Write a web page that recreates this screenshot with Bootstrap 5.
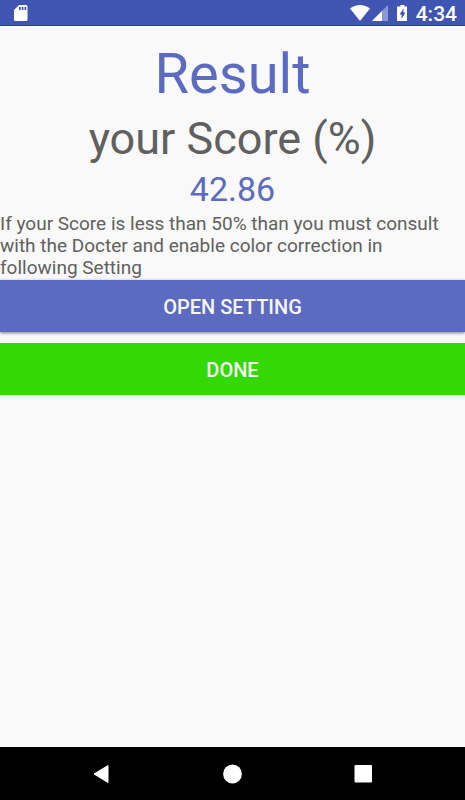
<!DOCTYPE html>
<html lang="en">
<head>
<meta charset="utf-8">
<meta name="viewport" content="width=device-width, initial-scale=1">
<title>Result</title>
<link href="https://cdn.jsdelivr.net/npm/bootstrap@5.3.0/dist/css/bootstrap.min.css" rel="stylesheet">
<style>
body { font-family: Roboto, sans-serif; background: #f9f9f9; color: #606060; }
.status-bar { background: #4054b2; height: 26px; border-bottom: 1px solid #2440a8; }
.clock { font-size: 21px; line-height: 24px; font-weight: 500; padding-top: 2px; }
.accent { color: #5c6bc0; }
.title { font-size: 56px; line-height: 66px; font-weight: 400; padding-top: 15px; }
.subtitle { font-size: 45px; line-height: 54px; font-weight: 400; padding-top: 5px; }
.score { font-size: 34px; line-height: 40px; padding-top: 3px; }
.advice { font-size: 19px; line-height: 22px; padding: 4px 8px 1px 0; }
.actions { gap: 11px; }
.action { height: 52px; font-size: 20px; font-weight: 500; color: #f6f6f6; padding: 2px 0 0; }
.action:hover { color: #fff; }
.action-open, .action-open:hover { background: #5c6bc0; box-shadow: 0 1px 3px rgba(0,0,0,.5); }
.action-done, .action-done:hover { background: #33d805; }
.nav-keys { height: 53px; background: #000; padding: 0 36px; }
.nav-key { line-height: 0; }
</style>
</head>
<body class="d-flex flex-column min-vh-100">
<header class="status-bar d-flex align-items-center text-white px-2">
  <svg width="24" height="26" viewBox="0 0 24 26" role="img" aria-label="SD card"><path fill="#fff" d="M11 5h7q1.500 0 1.500 1.500v13q0 1.500-1.500 1.500H7.500q-1.500 0-1.500-1.500V10z"/><path fill="#4054b2" d="M11 7h1.700v3H11zM13.800 7h1.700v3h-1.700zM16.500 7h1.700v3h-1.700z"/></svg>
  <svg class="ms-auto" width="60" height="26" viewBox="0 0 60 26" role="img" aria-label="Wi-Fi, mobile signal, battery charging">
    <path fill="#fff" d="M2 8.500Q6.500 5 12 5t10 3.500L12 21z"/>
    <path fill="#fff" fill-opacity=".4" d="M40 5v16H24z"/>
    <path fill="#fff" d="M34 11v10H24z"/>
    <path fill="#fff" d="M52.500 5h4v1.500h2.500V21h-10V6.500h3.500z"/>
    <path fill="#4054b2" d="M55.500 8.500v4h2l-4 6.500v-4.500h-2z"/>
  </svg>
  <span class="clock ms-2">4:34</span>
</header>
<main class="flex-grow-1">
  <h1 class="title accent text-center mb-0">Result</h1>
  <h2 class="subtitle text-center mb-0">your Score (%)</h2>
  <p class="score accent text-center mb-0">42.86</p>
  <p class="advice mb-0">If your Score is less than 50% than you must consult with the Docter and enable color correction in following Setting</p>
  <div class="actions d-grid">
    <button type="button" class="btn action action-open rounded-0 border-0">OPEN SETTING</button>
    <button type="button" class="btn action action-done rounded-0 border-0">DONE</button>
  </div>
</main>
<footer class="nav-keys d-flex justify-content-around align-items-center">
  <button type="button" class="nav-key btn p-0 border-0" aria-label="Back"><svg width="20" height="20" viewBox="0 0 20 20"><path fill="#fff" stroke="#fff" stroke-linejoin="round" d="M2 10l14-8.500v17z"/></svg></button>
  <button type="button" class="nav-key btn p-0 border-0" aria-label="Home"><svg width="20" height="20" viewBox="0 0 20 20"><circle cx="9.500" cy="10" r="9.400" fill="#fff"/></svg></button>
  <button type="button" class="nav-key btn p-0 border-0" aria-label="Recent apps"><svg width="20" height="20" viewBox="0 0 20 20"><rect x=".5" y="1" width="17.500" height="17.500" rx="1" fill="#fff"/></svg></button>
</footer>
<script src="https://cdn.jsdelivr.net/npm/bootstrap@5.3.0/dist/js/bootstrap.bundle.min.js"></script>
</body>
</html>
